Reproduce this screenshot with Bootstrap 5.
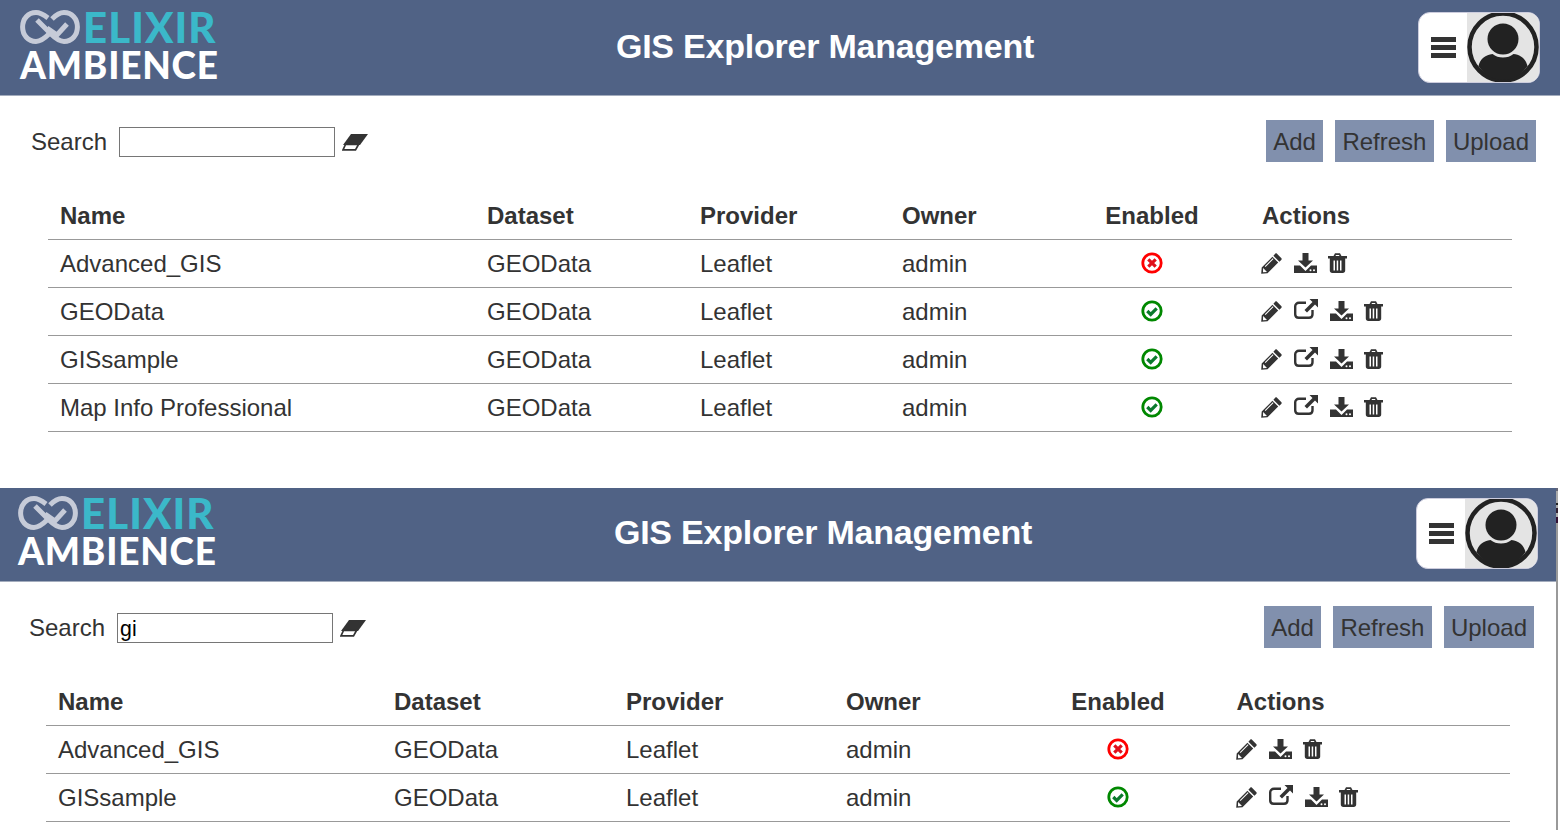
<!DOCTYPE html>
<html lang="en">
<head>
<meta charset="utf-8">
<title>GIS Explorer Management</title>
<link href="https://cdn.jsdelivr.net/npm/bootstrap@5.3.0/dist/css/bootstrap.min.css" rel="stylesheet">
<style>
html,body{height:830px;overflow:hidden;background:#fff}
body{font-family:"Liberation Sans",Arial,sans-serif;font-size:24px;color:#333}
.gis-panel{width:1560px;height:486px;flex:none;overflow:hidden}
.gis-second{margin-left:-2px;position:relative;height:344px}
.gis-top{height:96px;background:#506285;border-bottom:1px solid #a3acbd;padding:0 20px;display:flex;align-items:center}
.gis-logo{width:212px;flex:none;display:flex;flex-direction:column;line-height:1;font-family:Lato,"Liberation Sans",sans-serif;font-weight:900;margin-top:-6px}
.gis-logo-a{display:flex;align-items:center;height:38px}
.gis-elixir{color:#3bb8c9;font-size:42px;margin-left:3px;letter-spacing:1.05px;line-height:38px}
.gis-ambience{color:#fff;font-size:37px;line-height:34px;letter-spacing:.8px;margin-top:2px}
.gis-title{flex:1;text-align:center;color:#fff;font-size:34px;letter-spacing:-.22px;font-weight:700;margin:-3px 0 0;line-height:1;font-family:"Liberation Sans",Arial,sans-serif}
.gis-menu{width:122px;height:71px;border:1px solid #ccd;border-radius:12px;overflow:hidden;display:flex;background:#fff;margin-top:-1px;padding:0}
.gis-burger{width:48px;flex:none;display:flex;align-items:center;justify-content:center;padding-left:1px}
.gis-avatar{width:72px;flex:none;height:100%;background:#e4e4e4;display:flex;align-items:center;justify-content:center}
.gis-tools{display:flex;align-items:center;padding:24px 24px 0 31px;height:68px}
.gis-tools label{margin-right:12px}
.gis-search{width:216px;height:30px;border:1px solid #767676;padding:3px 2px 0;font-size:21.3px;color:#000;background:#fff;border-radius:0;outline:0;line-height:1;font-family:"Liberation Sans",Arial,sans-serif}
.gis-erase{margin-left:7px;display:block}
.gis-btn{--bs-btn-padding-x:7px;--bs-btn-padding-y:0;--bs-btn-font-size:24px;--bs-btn-border-width:0;--bs-btn-border-radius:0;--bs-btn-bg:#8190ad;--bs-btn-color:#333;--bs-btn-hover-bg:#8190ad;--bs-btn-hover-color:#333;height:42px;line-height:44px;margin-left:12px;align-self:flex-start}
.gis-btn-r{--bs-btn-padding-x:7.5px}
.gis-wrap{padding:27px 48px 0 48px}
.gis-table{width:1464px;table-layout:fixed;margin:0;--bs-table-color:#333;--bs-table-border-color:#999;--bs-table-bg:transparent}
.gis-table th,.gis-table td{height:48px;padding:2px 12px 0;vertical-align:middle;font-size:24px;line-height:1.2;border-bottom:1px solid #999;color:#333}
.gis-table th{font-weight:700;padding-top:3px}
.gis-table td.gis-ic{padding-top:0}
.gis-c{text-align:center}
.gis-acts{display:flex;align-items:center;gap:12px;margin-left:-1px}
.gis-acts svg{display:block;flex:none}
.gis-acts .gis-dl{margin-right:-1px}
.gis-acts .gis-up{margin-top:-4px}
.gis-table td.gis-c svg{display:block;margin:0 auto}
.t1 .c1{width:427px}.t1 .c2{width:213px}.t1 .c3{width:202px}.t1 .c4{width:164px}.t1 .c5{width:196px}.t1 .c6{width:262px}
.t2 .c1{width:336px}.t2 .c2{width:232px}.t2 .c3{width:220px}.t2 .c4{width:177.5px}.t2 .c5{width:213px}.t2 .c6{width:285.5px}
.gis-cover{position:absolute;left:0;top:0;width:100%;height:2px;background:#fff}
.gis-strip{position:absolute;left:1558px;top:2px;width:2px;height:342px;background:linear-gradient(#667 0,#667 3px,#aaa 3px,#aaa 15px,#222 15px,#222 17px,#aaa 17px,#aaa 20px,#323 20px,#323 25px,#aaa 25px,#aaa 29px,#313 29px,#313 35px,#999 35px)}
.gis-stage{display:flex;flex-direction:column}
</style>
</head>
<body>
<svg width="0" height="0" class="position-absolute">
<defs>
<symbol id="i-logo" viewBox="0 0 60 34"><g fill="none" stroke="#c6cbd8" stroke-width="5" stroke-linecap="butt"><path d="M28 8C24 5 20 2.600 16 2.600 8 2.600 2.600 9 2.600 17S8 31.400 16 31.400C21 31.400 25 28 29 24"/><path d="M32 9C36 5 40 2.600 44 2.600 52 2.600 57.400 9 57.400 17S52 31.400 44 31.400C39 31.400 35 28 31 24L17 10"/><path d="M27 18L37 25 47 14"/></g></symbol>
<symbol id="i-pencil" viewBox="0 0 21 21"><path fill="#333" d="M16 .8l4.200 4.200c.7.700.7 1.400 0 2l-1.800 1.800-6-6 1.800-2c.6-.6 1.200-.6 1.800 0zM11.400 3.800l5.800 5.800L6.500 20.300.2 20.800l.5-6.300z"/><path fill="#fff" d="M2.100 15l3.900 3.900-4 .3zM3.800 13.300L11.800 5.300l.7.700-8 8z"/></symbol>
<symbol id="i-ext" viewBox="0 0 24 20"><path fill="none" stroke="#333" stroke-width="2.400" d="M12 3.800H5C2.800 3.800 1.200 5.300 1.200 7.300v8c0 2 1.500 3.500 3.500 3.500H15c2 0 3.500-1.500 3.500-3.500V11"/><path fill="#333" d="M15.500 0H24v8.500l-3-3-8 8-2.500-2.500 8-8z"/></symbol>
<symbol id="i-dl" viewBox="0 0 23 20"><path fill="#333" d="M8.500 0h6v7.500h4.500l-7.500 7-7.500-7h4.500z"/><path fill="#333" d="M0 12.500h6L11.500 18 17 12.500h6V20H0z"/><circle cx="16.500" cy="17.300" r="1" fill="#fff"/><circle cx="20" cy="17.300" r="1" fill="#fff"/></symbol>
<symbol id="i-trash" viewBox="0 0 19 20"><path fill="#333" d="M0 3h5.500L7 .3h5L13.500 3H19v2.500H0zM8 2l-.5 1h4L11 2z"/><path fill="#333" fill-rule="evenodd" d="M1.800 5h15.400v12.500c0 1.500-1 2.500-2.500 2.500H4.300c-1.500 0-2.500-1-2.500-2.500zM5.500 7.500v10h1.500v-10zM8.700 7.500v10h1.500v-10zM12 7.500v10h1.500v-10z"/></symbol>
<symbol id="i-no" viewBox="0 0 22 22"><circle cx="11" cy="11" r="9.200" fill="none" stroke="#f00" stroke-width="2.800"/><path d="M7.300 7.300l7.400 7.400M14.700 7.300l-7.400 7.400" stroke="#e0101c" stroke-width="3.200" fill="none"/></symbol>
<symbol id="i-ok" viewBox="0 0 22 22"><circle cx="11" cy="11" r="9.200" fill="none" stroke="#080" stroke-width="2.800"/><path d="M6.300 11l3.400 3.400 6-6" stroke="#0a7a2c" stroke-width="3.200" fill="none"/></symbol>
<symbol id="i-erase" viewBox="0 0 26 17"><path fill="#333" d="M9 0h17l-8 11H1z"/><path fill="#fff" stroke="#333" stroke-width="1.700" d="M3.500 10.500h13L13.500 15.800H1z"/></symbol>
<symbol id="i-user" viewBox="0 0 72 70"><circle cx="36" cy="35" r="33.500" fill="none" stroke="#222" stroke-width="4.500"/><circle cx="36" cy="27" r="15.500" fill="#222"/><path fill="#222" d="M11.500 54C13.500 46 18.500 43 25.500 42c3 2.500 6.500 3.500 10.500 3.500S43.500 44.500 46.500 42c7 1 12 4 14 12-6 9-14.500 14-24.500 14S17.500 63 11.500 54z"/></symbol>
</defs>
</svg>
<div class="gis-stage">

<section class="gis-panel">
<nav class="navbar gis-top">
<div class="gis-logo"><div class="gis-logo-a"><svg width="60" height="34"><use href="#i-logo"/></svg><span class="gis-elixir">ELIXIR</span></div><span class="gis-ambience">AMBIENCE</span></div>
<h1 class="gis-title">GIS Explorer Management</h1>
<button class="gis-menu" type="button" aria-label="Menu">
<span class="gis-burger"><svg width="25" height="21"><path fill="#333" d="M0 0h25v5H0zM0 8h25v5H0zM0 16h25v5H0z"/></svg></span>
<span class="gis-avatar"><svg width="72" height="70"><use href="#i-user"/></svg></span>
</button>
</nav>
<div class="gis-tools">
<label for="s1">Search</label><input id="s1" class="gis-search" type="text" value=""><svg class="gis-erase" width="26" height="17"><use href="#i-erase"/></svg>
<div class="ms-auto d-flex align-self-start"><button class="btn gis-btn" type="button">Add</button><button class="btn gis-btn gis-btn-r" type="button">Refresh</button><button class="btn gis-btn" type="button">Upload</button></div>
</div>
<div class="gis-wrap">
<table class="table gis-table t1">
<colgroup><col class="c1"><col class="c2"><col class="c3"><col class="c4"><col class="c5"><col class="c6"></colgroup>
<thead><tr><th>Name</th><th>Dataset</th><th>Provider</th><th>Owner</th><th class="gis-c">Enabled</th><th>Actions</th></tr></thead>
<tbody>
<tr><td>Advanced_GIS</td><td>GEOData</td><td>Leaflet</td><td>admin</td><td class="gis-c gis-ic"><svg width="22" height="22"><use href="#i-no"/></svg></td><td class="gis-ic"><div class="gis-acts"><svg width="21" height="21"><use href="#i-pencil"/></svg><svg class="gis-dl" width="23" height="20"><use href="#i-dl"/></svg><svg width="19" height="20"><use href="#i-trash"/></svg></div></td></tr>
<tr><td>GEOData</td><td>GEOData</td><td>Leaflet</td><td>admin</td><td class="gis-c gis-ic"><svg width="22" height="22"><use href="#i-ok"/></svg></td><td class="gis-ic"><div class="gis-acts"><svg width="21" height="21"><use href="#i-pencil"/></svg><svg class="gis-up" width="24" height="20"><use href="#i-ext"/></svg><svg class="gis-dl" width="23" height="20"><use href="#i-dl"/></svg><svg width="19" height="20"><use href="#i-trash"/></svg></div></td></tr>
<tr><td>GISsample</td><td>GEOData</td><td>Leaflet</td><td>admin</td><td class="gis-c gis-ic"><svg width="22" height="22"><use href="#i-ok"/></svg></td><td class="gis-ic"><div class="gis-acts"><svg width="21" height="21"><use href="#i-pencil"/></svg><svg class="gis-up" width="24" height="20"><use href="#i-ext"/></svg><svg class="gis-dl" width="23" height="20"><use href="#i-dl"/></svg><svg width="19" height="20"><use href="#i-trash"/></svg></div></td></tr>
<tr><td>Map Info Professional</td><td>GEOData</td><td>Leaflet</td><td>admin</td><td class="gis-c gis-ic"><svg width="22" height="22"><use href="#i-ok"/></svg></td><td class="gis-ic"><div class="gis-acts"><svg width="21" height="21"><use href="#i-pencil"/></svg><svg class="gis-up" width="24" height="20"><use href="#i-ext"/></svg><svg class="gis-dl" width="23" height="20"><use href="#i-dl"/></svg><svg width="19" height="20"><use href="#i-trash"/></svg></div></td></tr>
</tbody>
</table>
</div>
</section>

<section class="gis-panel gis-second">
<nav class="navbar gis-top">
<div class="gis-logo"><div class="gis-logo-a"><svg width="60" height="34"><use href="#i-logo"/></svg><span class="gis-elixir">ELIXIR</span></div><span class="gis-ambience">AMBIENCE</span></div>
<h1 class="gis-title">GIS Explorer Management</h1>
<button class="gis-menu" type="button" aria-label="Menu">
<span class="gis-burger"><svg width="25" height="21"><path fill="#333" d="M0 0h25v5H0zM0 8h25v5H0zM0 16h25v5H0z"/></svg></span>
<span class="gis-avatar"><svg width="72" height="70"><use href="#i-user"/></svg></span>
</button>
</nav>
<div class="gis-tools">
<label for="s2">Search</label><input id="s2" class="gis-search" type="text" value="gi"><svg class="gis-erase" width="26" height="17"><use href="#i-erase"/></svg>
<div class="ms-auto d-flex align-self-start"><button class="btn gis-btn" type="button">Add</button><button class="btn gis-btn gis-btn-r" type="button">Refresh</button><button class="btn gis-btn" type="button">Upload</button></div>
</div>
<div class="gis-wrap">
<table class="table gis-table t2">
<colgroup><col class="c1"><col class="c2"><col class="c3"><col class="c4"><col class="c5"><col class="c6"></colgroup>
<thead><tr><th>Name</th><th>Dataset</th><th>Provider</th><th>Owner</th><th class="gis-c">Enabled</th><th>Actions</th></tr></thead>
<tbody>
<tr><td>Advanced_GIS</td><td>GEOData</td><td>Leaflet</td><td>admin</td><td class="gis-c gis-ic"><svg width="22" height="22"><use href="#i-no"/></svg></td><td class="gis-ic"><div class="gis-acts"><svg width="21" height="21"><use href="#i-pencil"/></svg><svg class="gis-dl" width="23" height="20"><use href="#i-dl"/></svg><svg width="19" height="20"><use href="#i-trash"/></svg></div></td></tr>
<tr><td>GISsample</td><td>GEOData</td><td>Leaflet</td><td>admin</td><td class="gis-c gis-ic"><svg width="22" height="22"><use href="#i-ok"/></svg></td><td class="gis-ic"><div class="gis-acts"><svg width="21" height="21"><use href="#i-pencil"/></svg><svg class="gis-up" width="24" height="20"><use href="#i-ext"/></svg><svg class="gis-dl" width="23" height="20"><use href="#i-dl"/></svg><svg width="19" height="20"><use href="#i-trash"/></svg></div></td></tr>
</tbody>
</table>
</div>
<div class="gis-cover"></div>
<div class="gis-strip"></div>
</section>

</div>
<script src="https://cdn.jsdelivr.net/npm/bootstrap@5.3.0/dist/js/bootstrap.bundle.min.js"></script>
</body>
</html>
